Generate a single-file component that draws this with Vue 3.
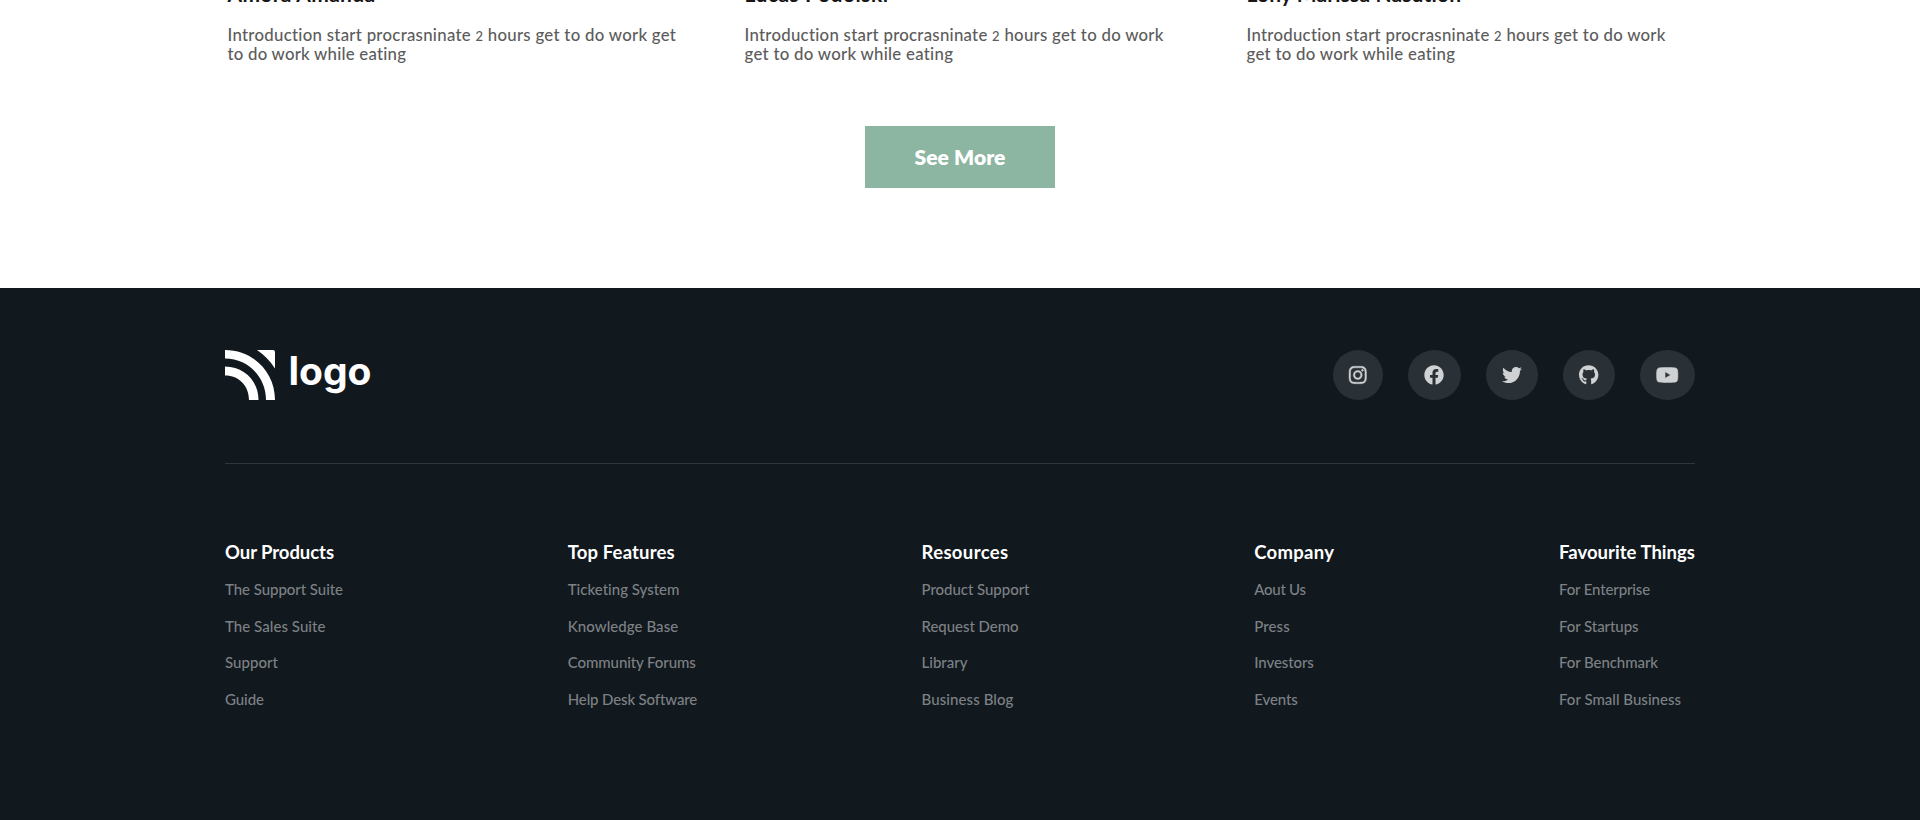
<script setup>
// Adjusts the tracking of a text so that it takes the given width in pixels.
const vTrack = {
  mounted(el, { value }) {
    const natural = el.getBoundingClientRect().width
    el.style.letterSpacing = `${(value - natural) / el.textContent.length}px`
  },
}

const people = [
  {
    name: 'Amora Amanda', nameWidth: 148,
    lines: [
      { before: 'Introduction start procrasninate ', digit: '2', after: ' hours get to do work get', width: 449 },
      { before: 'to do work while eating', width: 179 },
    ],
  },
  {
    name: 'Lucas Podolski', nameWidth: 144,
    lines: [
      { before: 'Introduction start procrasninate ', digit: '2', after: ' hours get to do work', width: 419.5 },
      { before: 'get to do work while eating', width: 209 },
    ],
  },
  {
    name: 'Lony Marissa Nasution', nameWidth: 215,
    lines: [
      { before: 'Introduction start procrasninate ', digit: '2', after: ' hours get to do work', width: 419.5 },
      { before: 'get to do work while eating', width: 209 },
    ],
  },
]

const socials = [
  { name: 'Instagram', w: 448, d: 'M224.1 141c-63.6 0-114.9 51.3-114.9 114.9s51.3 114.9 114.9 114.9S339 319.5 339 255.9 287.7 141 224.1 141zm0 189.6c-41.1 0-74.7-33.5-74.7-74.7s33.5-74.7 74.7-74.7 74.7 33.5 74.7 74.7-33.6 74.7-74.7 74.7zm146.4-194.3c0 14.9-12 26.8-26.8 26.8-14.9 0-26.8-12-26.8-26.8s12-26.8 26.8-26.8 26.8 12 26.8 26.8zm76.1 27.2c-1.7-35.9-9.9-67.7-36.2-93.9-26.2-26.2-58-34.4-93.9-36.2-37-2.1-147.9-2.1-184.9 0-35.8 1.7-67.6 9.9-93.9 36.1s-34.4 58-36.2 93.9c-2.1 37-2.1 147.9 0 184.9 1.7 35.9 9.9 67.7 36.2 93.9s58 34.4 93.9 36.2c37 2.1 147.9 2.1 184.9 0 35.9-1.7 67.7-9.9 93.9-36.2 26.2-26.2 34.4-58 36.2-93.9 2.1-37 2.1-147.8 0-184.8zM398.8 388c-7.8 19.6-22.9 34.7-42.6 42.6-29.5 11.7-99.5 9-132.1 9s-102.7 2.6-132.1-9c-19.6-7.8-34.7-22.9-42.6-42.6-11.7-29.5-9-99.5-9-132.1s-2.6-102.7 9-132.1c7.8-19.6 22.9-34.7 42.6-42.6 29.5-11.7 99.5-9 132.1-9s102.7-2.6 132.1 9c19.6 7.8 34.7 22.9 42.6 42.6 11.7 29.5 9 99.5 9 132.1s2.7 102.7-9 132.1z' },
  { name: 'Facebook', w: 512, d: 'M504 256C504 119 393 8 256 8S8 119 8 256c0 123.78 90.69 226.38 209.25 245V327.69h-63V256h63v-54.64c0-62.15 37-96.48 93.67-96.48 27.14 0 55.52 4.84 55.52 4.84v61h-31.28c-30.8 0-40.41 19.12-40.41 38.73V256h68.78l-11 71.69h-57.78V501C413.31 482.38 504 379.78 504 256z' },
  { name: 'Twitter', w: 512, d: 'M459.37 151.716c.325 4.548.325 9.097.325 13.645 0 138.72-105.583 298.558-298.558 298.558-59.452 0-114.68-17.219-161.137-47.106 8.447.974 16.568 1.299 25.34 1.299 49.055 0 94.213-16.568 130.274-44.832-46.132-.975-84.792-31.188-98.112-72.772 6.498.974 12.995 1.624 19.818 1.624 9.421 0 18.843-1.3 27.614-3.573-48.081-9.747-84.143-51.98-84.143-102.985v-1.299c13.969 7.797 30.214 12.67 47.431 13.319-28.264-18.843-46.781-51.005-46.781-87.391 0-19.492 5.197-37.36 14.294-52.954 51.655 63.675 129.3 105.258 216.365 109.807-1.624-7.797-2.599-15.918-2.599-24.04 0-57.828 46.782-104.934 104.934-104.934 30.213 0 57.502 12.67 76.67 33.137 23.715-4.548 46.456-13.32 66.599-25.34-7.798 24.366-24.366 44.833-46.132 57.827 21.117-2.273 41.584-8.122 60.426-16.243-14.292 20.791-32.161 39.308-52.628 54.253z' },
  { name: 'GitHub', w: 496, d: 'M165.9 397.4c0 2-2.3 3.6-5.2 3.6-3.3.3-5.6-1.3-5.6-3.6 0-2 2.3-3.6 5.2-3.6 3-.3 5.6 1.3 5.6 3.6zm-31.1-4.5c-.7 2 1.3 4.3 4.3 4.9 2.6 1 5.6 0 6.2-2s-1.3-4.3-4.3-5.2c-2.6-.7-5.5.3-6.2 2.3zm44.2-1.7c-2.9.7-4.9 2.6-4.6 4.9.3 2 2.9 3.3 5.9 2.6 2.9-.7 4.9-2.6 4.6-4.6-.3-1.9-3-3.2-5.9-2.9zM244.8 8C106.1 8 0 113.3 0 252c0 110.9 69.8 205.8 169.5 239.2 12.8 2.3 17.3-5.6 17.3-12.1 0-6.2-.3-40.4-.3-61.4 0 0-70 15-84.7-29.8 0 0-11.4-29.1-27.8-36.6 0 0-22.9-15.7 1.6-15.4 0 0 24.9 2 38.6 25.8 21.9 38.6 58.6 27.5 72.9 20.9 2.3-16 8.8-27.1 16-33.7-55.9-6.2-112.3-14.3-112.3-110.5 0-27.5 7.6-41.3 23.6-58.9-2.6-6.5-11.1-33.3 2.6-67.9 20.9-6.5 69 27 69 27 20-5.6 41.5-8.5 62.8-8.5s42.8 2.9 62.8 8.5c0 0 48.1-33.6 69-27 13.7 34.7 5.2 61.4 2.6 67.9 16 17.7 25.8 31.5 25.8 58.9 0 96.5-58.9 104.2-114.8 110.5 9.2 7.9 17 22.9 17 46.4 0 33.7-.3 75.4-.3 83.6 0 6.5 4.6 14.4 17.3 12.1C428.2 457.8 496 362.9 496 252 496 113.3 383.5 8 244.8 8z' },
  { name: 'YouTube', w: 576, d: 'M549.655 124.083c-6.281-23.65-24.787-42.276-48.284-48.597C458.781 64 288 64 288 64S117.22 64 74.629 75.486c-23.497 6.322-42.003 24.947-48.284 48.597-11.412 42.867-11.412 132.305-11.412 132.305s0 89.438 11.412 132.305c6.281 23.65 24.787 41.5 48.284 47.821C117.22 448 288 448 288 448s170.78 0 213.371-11.486c23.497-6.321 42.003-24.171 48.284-47.821 11.412-42.867 11.412-132.305 11.412-132.305s0-89.438-11.412-132.305zm-317.51 213.508V175.185l142.739 81.205-142.739 81.201z' },
]

const columns = [
  { title: 'Our Products', titleWidth: 109, width: 118, links: [['The Support Suite', 118], ['The Sales Suite', 100.5], ['Support', 53], ['Guide', 39]] },
  { title: 'Top Features', titleWidth: 107, width: 129, links: [['Ticketing System', 112], ['Knowledge Base', 110.5], ['Community Forums', 128], ['Help Desk Software', 129]] },
  { title: 'Resources', titleWidth: 87, width: 108, links: [['Product Support', 108], ['Request Demo', 97], ['Library', 46], ['Business Blog', 92]] },
  { title: 'Company', titleWidth: 80, width: 80, links: [['Aout Us', 51.5], ['Press', 35.5], ['Investors', 59.5], ['Events', 43.5]] },
  { title: 'Favourite Things', titleWidth: 136, width: 136, links: [['For Enterprise', 91], ['For Startups', 79.5], ['For Benchmark', 99], ['For Small Business', 122]] },
]
</script>

<template>
  <div class="page">
    <section class="team">
      <div class="people">
        <article v-for="p in people" :key="p.name" class="person">
          <h3><span v-track="p.nameWidth" class="text">{{ p.name }}</span></h3>
          <p>
            <span v-for="(l, i) in p.lines" :key="i" class="line"><span v-track="l.width" class="text">{{ l.before }}<span v-if="l.digit" class="digit">{{ l.digit }}</span>{{ l.after }}</span></span>
          </p>
        </article>
      </div>
      <button class="more"><span v-track="91" class="text">See More</span></button>
    </section>

    <footer class="footer">
      <div class="brand-row">
        <svg class="logo" width="150" height="50" viewBox="0 0 150 50">
          <g fill="#fff">
            <path d="M0 0C28 0 50 22 50 50H41C41 27 23 8.500 0 8.500Z" />
            <path d="M0 16.500C19 16.500 33.500 31 33.500 50H24C24 36 14 25.500 0 25.500Z" />
            <path d="M32 0H48Q50 0 50 2V18.500Q43 7.500 32 0Z" />
          </g>
          <text x="63.500" y="35.300" textLength="83" class="logo-text">logo</text>
        </svg>
        <nav class="socials">
          <a v-for="s in socials" :key="s.name" class="social" :class="s.name.toLowerCase()" :aria-label="s.name">
            <svg :width="s.w / 25.6" height="20" :viewBox="`0 0 ${s.w} 512`"><path :d="s.d" /></svg>
          </a>
        </nav>
      </div>
      <div class="columns">
        <div v-for="c in columns" :key="c.title" class="column" :style="{ width: c.width + 'px' }">
          <h4><span v-track="c.titleWidth" class="text">{{ c.title }}</span></h4>
          <ul>
            <li v-for="[label, width] in c.links" :key="label"><span v-track="width" class="text">{{ label }}</span></li>
          </ul>
        </div>
      </div>
    </footer>
  </div>
</template>

<style>
body { margin: 0; overflow: hidden; }
</style>

<style scoped>
.page { width: 1920px; height: 820px; overflow: hidden; display: flex; flex-direction: column; background: #fff; font-family: Lato, "Open Sans", sans-serif; }
.text { display: inline-block; white-space: pre; }
.team { height: 288px; display: flex; flex-direction: column; align-items: center; }
.people { align-self: stretch; height: 126px; display: grid; grid-template-columns: 517px 502px 1fr; padding-left: 227.5px; box-sizing: border-box; }
h3 { margin: -18px 0 0; height: 24px; line-height: 24px; font-size: 21px; font-weight: 700; color: #161616; }
.person p { margin: 19px 0 0; font-size: 16.8px; font-weight: 500; color: #5c5c5c; }
.line { display: block; height: 19px; line-height: 19px; }
.digit { font-size: 13px; }
.more { width: 190px; height: 62px; padding: 0 0 2px; border: 0; background: #8cb5a2; color: #fff; font: 800 21px Lato, sans-serif; text-align: center; }
.footer { flex: 1; background: #11181e; padding: 62px 225px 0; }
.brand-row { display: flex; justify-content: space-between; height: 113px; border-bottom: 1px solid #2e353b; }
.logo { display: block; overflow: visible; }
.logo-text { font: 700 39px Inter, sans-serif; fill: #fff; }
.socials { display: flex; gap: 25px; }
.social { height: 50px; padding: 0 16.25px; display: flex; align-items: center; border-radius: 50%; background: #293036; }
.social svg { display: block; overflow: visible; fill: #cfd1d2; }
.instagram svg { stroke: #cfd1d2; stroke-width: 10; }
.youtube svg { stroke: #cfd1d2; stroke-width: 14; }
.columns { display: flex; justify-content: space-between; padding-top: 76px; }
h4 { margin: 0; height: 24px; line-height: 24px; font-size: 18.5px; font-weight: 700; color: #fff; white-space: nowrap; }
ul { list-style: none; margin: 8px 0 0; padding: 0; }
li { height: 36.6px; line-height: 34px; font-size: 15px; font-weight: 500; color: #7d8185; white-space: nowrap; }
</style>
